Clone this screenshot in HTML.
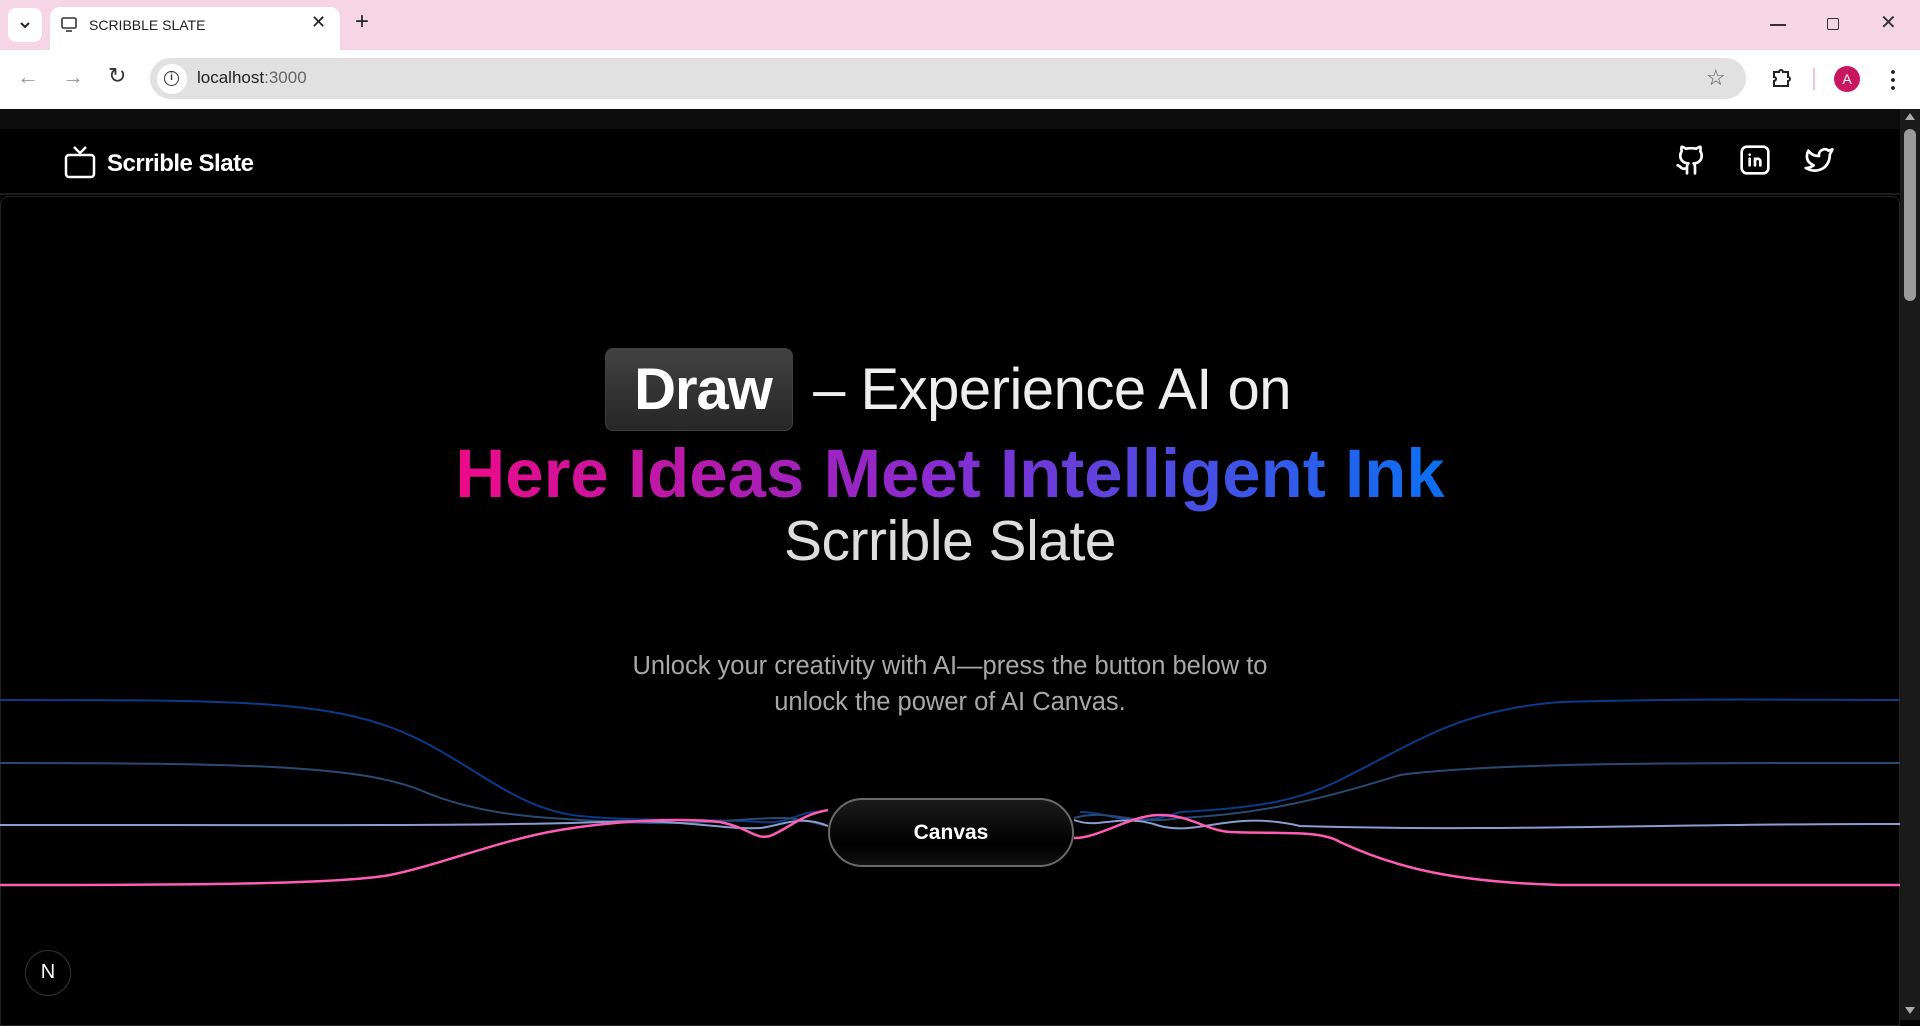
<!DOCTYPE html>
<html><head><meta charset="utf-8"><style>
*{margin:0;padding:0;box-sizing:border-box}
html,body{width:1920px;height:1020px;overflow:hidden;background:#000;font-family:"Liberation Sans",sans-serif}
.abs{position:absolute}
#tabbar{left:0;top:0;width:1920px;height:50px;background:#f6d5e4}
#toolbar{left:0;top:50px;width:1920px;height:59px;background:#fff}
#strip{left:0;top:109px;width:1900px;height:20px;background:#0d0d0d}
#header{left:0;top:129px;width:1900px;height:66px;background:#000;border-bottom:2px solid #1c1c1c}
#content{left:0;top:196px;width:1900px;height:830px;border:1px solid #222;border-radius:8px 8px 0 0;background:#000}
#scroll{left:1900px;top:109px;width:20px;height:911px;background:#1a1a1a}
.h1{position:absolute;left:0;width:1900px;text-align:center;color:#eee}
</style></head><body>
<div id="tabbar" class="abs">
 <div class="abs" style="left:8px;top:8px;width:34px;height:34px;background:#fff;border-radius:8px"></div>
 <svg class="abs" style="left:18px;top:18px" width="14" height="14" viewBox="0 0 14 14"><path d="M3 5l4 4 4-4" stroke="#222" stroke-width="2" fill="none"/></svg>
 <div class="abs" style="left:50px;top:7px;width:290px;height:43px;background:#fff;border-radius:10px 10px 0 0"></div>
 <svg class="abs" style="left:60px;top:16px" width="18" height="18" viewBox="0 0 18 18"><rect x="2" y="2" width="14" height="10" rx="1.5" stroke="#333" stroke-width="1.6" fill="none"/><path d="M6 15h6" stroke="#333" stroke-width="1.6"/></svg>
 <div class="abs" style="left:89px;top:17px;font-size:14px;color:#222">SCRIBBLE SLATE</div>
 <div class="abs" style="left:311px;top:12px;font-size:18px;color:#222">✕</div>
 <div class="abs" style="left:355px;top:8px;font-size:24px;color:#222">+</div>
 <div class="abs" style="left:1770px;top:24px;width:16px;height:1.5px;background:#333"></div>
 <div class="abs" style="left:1827px;top:18px;width:12px;height:12px;border:1.5px solid #333;border-radius:2px"></div>
 <div class="abs" style="left:1880px;top:10px;font-size:20px;color:#333">✕</div>
</div>
<div id="toolbar" class="abs">
 <div class="abs" style="left:17px;top:14px;font-size:22px;color:#999">←</div>
 <div class="abs" style="left:62px;top:14px;font-size:22px;color:#999">→</div>
 <div class="abs" style="left:108px;top:13px;font-size:22px;color:#333">↻</div>
 <div class="abs" style="left:150px;top:8px;width:1596px;height:41px;background:#e1e1e1;border-radius:21px"></div>
 <div class="abs" style="left:157px;top:14px;width:30px;height:30px;background:#fff;border-radius:15px"></div>
 <div class="abs" style="left:164px;top:21px;width:15px;height:15px;border:1.6px solid #333;border-radius:50%;font-size:10px;line-height:12px;text-align:center;font-weight:bold;color:#333">i</div>
 <div class="abs" style="left:197px;top:18px;font-size:17px;color:#222">localhost<span style="color:#666">:3000</span></div>
 <div class="abs" style="left:1706px;top:15px;font-size:22px;color:#555">☆</div>
 <svg class="abs" style="left:1770px;top:16px" width="24" height="24" viewBox="0 0 24 24"><path d="M4 6h5a2 2 0 014 0h5v5a2 2 0 010 4v5H4v-5a2 2 0 000-4z" fill="none" stroke="#222" stroke-width="2"/></svg>
 <div class="abs" style="left:1813px;top:18px;width:2px;height:22px;background:#f3c5d9"></div>
 <div class="abs" style="left:1834px;top:16px;width:26px;height:26px;border-radius:50%;background:#c8175e;color:#fff;font-size:14px;text-align:center;line-height:26px">A</div>
 <div class="abs" style="left:1891px;top:18px;width:4px;height:22px;background:radial-gradient(circle,#222 1.8px,transparent 2px) 0 0/4px 8px"></div>
</div>
<div id="strip" class="abs"></div>
<div id="header" class="abs">
 <svg class="abs" style="left:64px;top:16px" width="32" height="34" viewBox="0 0 32 34"><rect x="2" y="10" width="28" height="22" rx="3" stroke="#fff" stroke-width="2.5" fill="none"/><path d="M10 2l6 6 6-6" stroke="#fff" stroke-width="2.5" fill="none"/></svg>
 <div class="abs" style="left:107px;top:21px;font-size:24px;font-weight:bold;color:#fff;letter-spacing:-0.5px">Scrrible Slate</div>
 <svg class="abs" style="left:1675px;top:15px" width="32" height="32" viewBox="0 0 24 24" fill="none" stroke="#fff" stroke-width="2" stroke-linecap="round" stroke-linejoin="round"><path d="M15 22v-4a4.8 4.8 0 00-1-3.5c3 0 6-2 6-5.5.08-1.25-.27-2.48-1-3.5.28-1.150.28-2.35 0-3.5 0 0-1 0-3 1.5-2.64-.5-5.36-.5-8 0C6 2 5 2 5 2c-.3 1.15-.3 2.35 0 3.5A5.4 5.4 0 004 9c0 3.5 3 5.5 6 5.5-.39.49-.68 1.05-.85 1.65-.17.6-.22 1.23-.15 1.85v4"/><path d="M9 18c-4.51 2-5-2-7-2"/></svg>
 <svg class="abs" style="left:1739px;top:15px" width="32" height="32" viewBox="0 0 24 24" fill="none" stroke="#fff" stroke-width="2" stroke-linecap="round" stroke-linejoin="round"><rect x="2" y="2" width="20" height="20" rx="4"/><path d="M8 11v5M8 8v.01M12 16v-5M16 16v-3a2 2 0 00-4 0"/></svg>
 <svg class="abs" style="left:1803px;top:15px" width="32" height="32" viewBox="0 0 24 24" fill="none" stroke="#fff" stroke-width="2" stroke-linecap="round" stroke-linejoin="round"><path d="M22 4.01c-1 .49-1.98.69-3 .99-1.12-1.26-2.780-1.33-4.38-.73S11.99 6.44 12 8.01v1c-3.25.08-6.140-1.4-8-4 0 0-4.19 7.45 4 11-1.87 1.25-3.75 2.1-6 2 3.29 1.79 6.88 2.41 9.99 1.51 3.57-1.04 6.5-3.72 7.63-7.74.33-1.22.5-2.49.5-3.78-.01-.25 1.5-2.77 1.87-4z"/></svg>
</div>
<div id="content" class="abs"></div>
<svg class="abs" style="left:0;top:0" width="1900" height="1020" viewBox="0 0 1900 1020" fill="none" stroke-width="2">
 <path d="M0 700 C250 700 340 700 420 740 C480 770 520 810 580 816 C640 822 700 818 760 822 C790 825 800 810 820 812" stroke="#0b3a8a"/>
 <path d="M1080 812 C1110 812 1130 830 1180 812 C1260 808 1300 800 1340 780 C1420 740 1460 710 1560 702 C1700 698 1800 700 1900 700" stroke="#0b3a8a"/>
 <path d="M0 763 C250 763 360 766 420 790 C480 816 540 818 620 822 C700 826 740 818 780 818 C800 818 810 822 828 826" stroke="#2b4a73"/>
 <path d="M1074 818 C1110 808 1130 826 1180 818 C1260 814 1320 800 1400 775 C1500 762 1700 763 1900 763" stroke="#2b4a73"/>
 <path d="M0 825 C300 825 500 826 600 822 C680 818 720 830 760 828 C780 826 800 814 828 826" stroke="#8b9dd0"/>
 <path d="M1074 820 C1100 830 1120 812 1160 826 C1200 836 1230 810 1300 826 C1500 832 1700 823 1900 824" stroke="#8b9dd0"/>
 <path d="M0 885 C200 885 340 884 390 875 C440 865 500 840 560 830 C620 820 680 818 720 822 C750 828 755 840 770 836 C790 828 800 815 828 810" stroke="#ff5cb5" stroke-width="2.5"/>
 <path d="M1074 838 C1100 838 1130 815 1160 815 C1190 815 1205 830 1230 832 C1280 834 1320 830 1340 842 C1400 870 1460 882 1560 885 C1700 886 1800 885 1900 885" stroke="#ff5cb5" stroke-width="2.5"/>
</svg>
<div class="abs" style="left:605px;top:348px;width:188px;height:83px;background:linear-gradient(#424242,#262626);border:1px solid #3a3f44;border-radius:8px"></div>
<div class="h1" style="top:355px;font-size:58px;line-height:70px;font-weight:300"><span style="display:inline-block;width:188px;font-weight:bold;color:#fff;letter-spacing:-1px">Draw</span> <span style="letter-spacing:-0.5px">– Experience AI on</span></div>
<div class="h1" style="top:432px;font-size:69px;line-height:84px;font-weight:bold;letter-spacing:0px"><span style="background:linear-gradient(90deg,#ee0a88,#b51aad 25%,#8a2bd0 48%,#4f4ae0 72%,#0a70f3);-webkit-background-clip:text;background-clip:text;color:transparent">Here Ideas Meet Intelligent Ink</span></div>
<div class="h1" style="top:508px;font-size:57px;line-height:66px;color:#ddd;letter-spacing:-0.5px">Scrrible Slate</div>
<div class="h1" style="top:648px;font-size:25.5px;line-height:36px;color:#a8a8a8">Unlock your creativity with AI—press the button below to<br>unlock the power of AI Canvas.</div>
<div class="abs" style="left:828px;top:798px;width:246px;height:69px;border-radius:35px;background:linear-gradient(#1a1a1a,#000 70%,#111);border:2px solid #6a6a6a;color:#fff;font-weight:bold;font-size:21px;text-align:center;line-height:65px">Canvas</div>
<div class="abs" style="left:25px;top:950px;width:46px;height:46px;border-radius:50%;border:1.5px solid #333;background:#000;color:#fff;font-size:20px;text-align:center;line-height:43px">N</div>
<div id="scroll" class="abs">
 <div class="abs" style="left:5px;top:4px;width:0;height:0;border:5px solid transparent;border-bottom:7px solid #aaa;border-top:0"></div>
 <div class="abs" style="left:4px;top:20px;width:12px;height:172px;background:#9a9a9a;border-radius:6px"></div>
 <div class="abs" style="left:5px;top:898px;width:0;height:0;border:5px solid transparent;border-top:7px solid #aaa;border-bottom:0"></div>
</div>
</body></html>
